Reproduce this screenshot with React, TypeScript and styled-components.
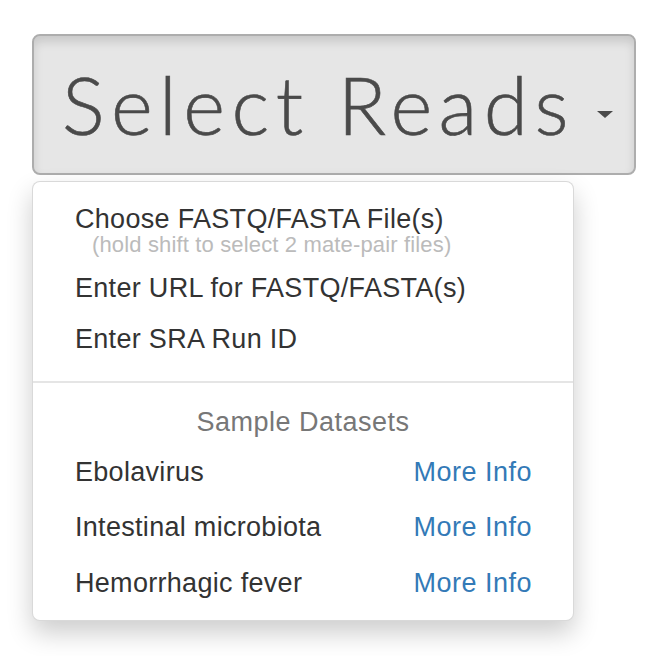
import React from "react";
import styled, { createGlobalStyle } from "styled-components";

const Global = createGlobalStyle`
  html, body { margin: 0; padding: 0; background: #ffffff; }
  body { font-family: "Liberation Sans", Arial, Helvetica, sans-serif; }
`;

const Page = styled.div`
  width: 656px;
  height: 656px;
  box-sizing: border-box;
  padding: 34px 0 0 32px;
  display: flex;
  flex-direction: column;
  align-items: flex-start;
`;

const Toggle = styled.button`
  width: 604px;
  height: 141px;
  box-sizing: border-box;
  display: flex;
  align-items: center;
  padding: 0 0 2px 28px;
  background: #e6e6e6;
  border: 2px solid #adadad;
  border-radius: 8px;
  box-shadow: inset 0 6px 10px rgba(0, 0, 0, 0.125);
  cursor: pointer;
`;

const ToggleLabel = styled.span`
  font-family: "Lato", "Open Sans", sans-serif;
  font-weight: 300;
  font-size: 80px;
  line-height: 80px;
  letter-spacing: 6.5px;
  color: #4a4a4a;
  -webkit-text-stroke: 0.6px #4a4a4a;
`;

const Caret = styled.span`
  width: 0;
  height: 0;
  margin: 22px 0 0 22px;
  border-top: 7px solid #4a4a4a;
  border-left: 8px solid transparent;
  border-right: 8px solid transparent;
`;

const Menu = styled.div`
  margin-top: 6px;
  width: 542px;
  box-sizing: border-box;
  padding: 12px 0 9px;
  background: #ffffff;
  border: 1px solid rgba(0, 0, 0, 0.15);
  border-radius: 8px;
  box-shadow: 0 12px 26px rgba(0, 0, 0, 0.2);
  display: flex;
  flex-direction: column;
`;

const Item = styled.div`
  padding: 6px 42px;
  font-size: 27px;
  line-height: 39px;
  letter-spacing: 0.3px;
  color: #333333;
  white-space: nowrap;
  cursor: pointer;
`;

const Hint = styled.div`
  margin: -6px 0 0 17px;
  font-size: 22px;
  line-height: 24px;
  letter-spacing: 0.15px;
  color: #bbbbbb;
`;

const Divider = styled.div`
  height: 2px;
  margin: 16px 0 20px;
  background: #e5e5e5;
`;

const Header = styled.div`
  padding-bottom: 2.5px;
  text-align: center;
  font-size: 27px;
  line-height: 39px;
  letter-spacing: 0.5px;
  color: #777777;
`;

const Row = styled.div`
  display: flex;
  justify-content: space-between;
  align-items: center;
  padding: 8.25px 41px 8.25px 42px;
  font-size: 27px;
  line-height: 39px;
  letter-spacing: 0.3px;
  color: #333333;
  white-space: nowrap;
`;

const InfoLink = styled.a`
  color: #337ab7;
  letter-spacing: 0.5px;
  text-decoration: none;
  cursor: pointer;
`;

const datasets = ["Ebolavirus", "Intestinal microbiota", "Hemorrhagic fever"];

export default function App() {
  return (
    <>
      <Global />
      <Page>
        <Toggle type="button">
          <ToggleLabel>Select Reads</ToggleLabel>
          <Caret />
        </Toggle>
        <Menu>
          <Item>
            Choose FASTQ/FASTA File(s)
            <Hint>(hold shift to select 2 mate-pair files)</Hint>
          </Item>
          <Item>Enter URL for FASTQ/FASTA(s)</Item>
          <Item>Enter SRA Run ID</Item>
          <Divider />
          <Header>Sample Datasets</Header>
          {datasets.map((d) => (
            <Row key={d}>
              <span>{d}</span>
              <InfoLink>More Info</InfoLink>
            </Row>
          ))}
        </Menu>
      </Page>
    </>
  );
}
